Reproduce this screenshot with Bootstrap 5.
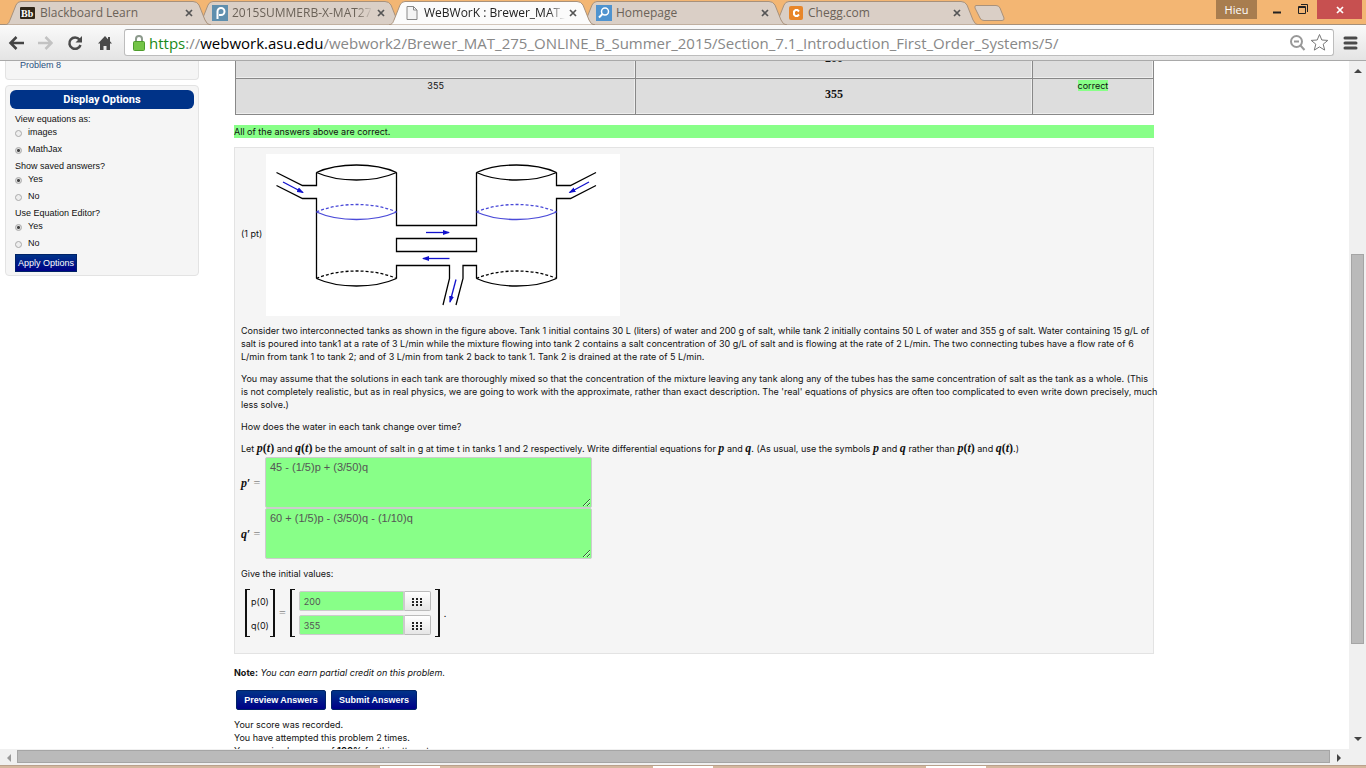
<!DOCTYPE html>
<html lang="en">
<head>
<meta charset="utf-8">
<meta name="viewport" content="width=device-width, initial-scale=1">
<title>WeBWorK : Brewer_MAT_275</title>
<link rel="stylesheet" href="https://cdn.jsdelivr.net/npm/bootstrap@5.3.0/dist/css/bootstrap.min.css">
<style>
body{font:9px/13px Inter,"Liberation Sans",sans-serif;color:#111;background:#fff}
button{font-family:inherit}
/* window frame */
.tabstrip{background:#f3b673;height:25px;border-bottom:1px solid #a68f78;font:12px/16px "Open Sans",sans-serif;padding-left:5px}
.wtab{position:relative;width:206px;height:24px;margin-right:-14px;padding:1px 18px 0 15px;color:#6b6258;gap:4px;isolation:isolate}
.wtab>svg.shape{position:absolute;left:0;top:0;z-index:-1}
.wtab.current{color:#222;height:25px;z-index:9!important}
.wtab .ttl{flex:1;overflow:hidden;white-space:nowrap;color:inherit;text-decoration:none}
.wtab .fade-end{-webkit-mask-image:linear-gradient(90deg,#000 88%,transparent)}
.wtab button,.winbtns button,.toolbar button{border:0;background:none;padding:0;display:flex;align-items:center;justify-content:center;color:#555}
.winbtns .user{width:41px;height:19px;background:#a87d4f;color:#fff;font-size:11px}
.winbtns .shut{width:45px;height:19px;background:#c75050}
.toolbar{height:36px;background:linear-gradient(#fafafa,#e4e4e4);border-bottom:1px solid #a9a9a9}
.navset{width:116px;gap:13px}
.address{height:27px;border:1px solid #bdbdbd;border-top-color:#a3a3a3;border-radius:3px;background:#fff;font:15px/24px "Open Sans",sans-serif;color:#888;white-space:nowrap;overflow:hidden}
/* scroll bars */
.vbar{width:17px;background:#f0f0f0}
.hbar{height:17px;background:#f0f0f0}
.thumb{background:#bababa;border:1px solid #a5a5a5}
.taskline{height:3px;background:#d4b79e;border-top:1px solid #b9a18c}
.taskline i{background:#fff;height:2px;width:60px}
/* course page */
.side{width:200px;padding-left:5px;font:9px/13px "Liberation Sans",sans-serif}
.sidebox{width:194px;border:1px solid #e3e3e3;border-radius:4px;background:#f5f5f5;padding:4px 4px 3px}
.sidebox.first{height:19px;border-top:0;border-radius:0 0 4px 4px;margin-bottom:5px;padding:0 0 0 14px;line-height:8px}
.sidebox.first a{text-decoration:none;color:#2a5080}
.sidebox h2{background:#038;color:#fff;font:bold 11px/19px Roboto,sans-serif;border-radius:6px;text-align:center;margin:0 0 4px}
.sidebox .opts{padding-left:5px}
.sidebox legend{font-size:9px;line-height:13px;margin:0;float:none}
.sidebox label{display:flex;align-items:center;gap:6px;height:12px;margin-bottom:5px}
.sidebox input{appearance:none;width:7px;height:7px;border:1px solid #aaa;border-radius:50%;background:#eee;margin:2px 0 0}
.sidebox input:checked{background:radial-gradient(circle,#444 0 1px,#ddd 2px)}
.bluebtn{background:linear-gradient(#038,#008);color:#fff;border:1px solid #026;border-radius:2px;font:bold 9px/13px "Liberation Sans",sans-serif;padding:0}
.bluebtn.apply{width:62px;height:18px;border-radius:0;font-weight:normal;white-space:nowrap}
.bluebtn.act{height:20px;width:90px}
.bluebtn.act+.act{width:86px}
.actions{padding:3px 2px 0;gap:5px}
.main{margin:0 195px 0 34px;min-width:0}
.answers{margin:-19px 0 10px 1px;width:calc(100% - 1px);background:#ddd;border:1px solid #888;border-collapse:collapse;text-align:center}
.answers td{border:1px solid #888;height:36px;padding:0 2px 1px;vertical-align:top;box-shadow:inset -1px -1px #eee}
.answers td.mth{vertical-align:middle;padding-bottom:5px}
.mth{font-family:"Liberation Serif",serif;font-weight:bold;font-size:12px;line-height:12px}
.okay{background:#8f8}
.problem{background:#f5f5f5;border:1px solid #e3e3e3;margin-top:9px;padding:6px 6px 16px}
.problem p{margin:0 0 9px}
.problem p.statement{white-space:nowrap}
.problem p.lead-in{margin:0;padding-bottom:2px}
.figure-svg{background:#fff}
.eq{width:24px;white-space:nowrap}
.eq span,.eqs{color:#888;font-weight:normal}
textarea.okay{width:327px;height:51px;border:1px solid #ccc;border-radius:2px;color:#555;font:11px/16px "Liberation Sans",sans-serif;padding:1px 4px;resize:both;display:block}
.brk{border:1px solid #111;border-width:1px 2px;width:5px;height:48px}
.brk.l{border-right:0}.brk.r{border-left:0}
.vec{gap:11px;width:20px;text-align:center}
.val input{width:105px;height:20px;border:1px solid #ccc;color:#555;padding:0 4px;background:#8f8;border-radius:2px 0 0 2px}
.val button{width:27px;height:20px;border:1px solid #bbb;border-left-color:#ccc;border-radius:0 2px 2px 0;background:linear-gradient(#fff,#e6e6e6);padding:0;line-height:10px}
</style>
</head>
<body class="vh-100 d-flex flex-column overflow-hidden">
<svg width="0" height="0" class="position-absolute" aria-hidden="true">
  <symbol id="tabshape" viewBox="0 0 206 25"><path d="M0 25C4 24 4 22 5 20L11 5Q12.500 1.500 16 1.500H188Q192 1.500 194 5L200 20Q202 25 206 25Z"/></symbol>
  <symbol id="cross" viewBox="0 0 8 8"><path d="M1 1L7 7M7 1L1 7" stroke="currentColor" stroke-width="1.700"/></symbol>
  <symbol id="keys" viewBox="0 0 10 8"><path d="M0 0h2v2H0zM4 0h2v2H4zM8 0h2v2H8zM0 3h2v2H0zM4 3h2v2H4zM8 3h2v2H8zM0 6h2v2H0zM4 6h2v2H4zM8 6h2v2H8z" fill="#222"/></symbol>
</svg>

<header>
  <div class="tabstrip d-flex">
    <div class="wtab d-flex align-items-center z-3"><svg class="shape" width="206" height="25" fill="#dacfc6" stroke="#a8917b"><use href="#tabshape"/></svg>
      <svg width="16" height="12"><rect width="15" height="12" rx="1" fill="#2f2618"/><text x="1" y="10" font-family="Liberation Serif" font-weight="bold" font-size="10" fill="#fff">Bb</text></svg>
      <a class="ttl" href="#">Blackboard Learn</a><button aria-label="Close tab"><svg width="8" height="8"><use href="#cross"/></svg></button></div>
    <div class="wtab d-flex align-items-center z-2"><svg class="shape" width="206" height="25" fill="#dacfc6" stroke="#a8917b"><use href="#tabshape"/></svg>
      <svg width="16" height="16"><rect width="16" height="16" fill="#5f8fae"/><path d="M5.500 14V6.500a3.500 3.500 0 1 1 3.500 3.500H7" fill="none" stroke="#fff" stroke-width="2"/></svg>
      <a class="ttl fade-end" href="#">2015SUMMERB-X-MAT27</a><button aria-label="Close tab"><svg width="8" height="8"><use href="#cross"/></svg></button></div>
    <div class="wtab current d-flex align-items-center"><svg class="shape" width="206" height="25" fill="#fbfbfb" stroke="#a8917b"><use href="#tabshape"/></svg>
      <svg width="16" height="16"><path d="M3 1.500h6.500L13 5v9.500H3zM9.500 1.500V5H13" fill="#f4f4f4" stroke="#888"/></svg>
      <a class="ttl fade-end" href="#">WeBWorK : Brewer_MAT_2</a><button aria-label="Close tab"><svg width="8" height="8"><use href="#cross"/></svg></button></div>
    <div class="wtab d-flex align-items-center z-2"><svg class="shape" width="206" height="25" fill="#dacfc6" stroke="#a8917b"><use href="#tabshape"/></svg>
      <svg width="16" height="16"><rect width="16" height="16" fill="#4f93cf"/><circle cx="9" cy="6.500" r="3.500" fill="none" stroke="#fff" stroke-width="1.500"/><path d="M6.500 9L3 12.500" stroke="#fff" stroke-width="2"/></svg>
      <a class="ttl" href="#">Homepage</a><button aria-label="Close tab"><svg width="8" height="8"><use href="#cross"/></svg></button></div>
    <div class="wtab d-flex align-items-center z-1"><svg class="shape" width="206" height="25" fill="#dacfc6" stroke="#a8917b"><use href="#tabshape"/></svg>
      <svg width="16" height="16"><rect x="1" y="1" width="14" height="14" rx="2" fill="#e8862a"/><path d="M11 6.500L9.500 5h-2L6 6.500v3L7.500 11h2L11 9.500" fill="none" stroke="#fff" stroke-width="2"/></svg>
      <a class="ttl" href="#">Chegg.com</a><button aria-label="Close tab"><svg width="8" height="8"><use href="#cross"/></svg></button></div>
    <svg class="ms-2" width="34" height="24"><path d="M3 5.500H23Q26 5.500 27 8L31 18Q31.500 20.500 29 20.500H11Q8 20.500 7 18L2 8Q1.500 5.500 3 5.500Z" fill="#dacfc6" stroke="#a8917b"/></svg>
    <div class="winbtns d-flex align-items-start ms-auto me-1">
      <button class="user">Hieu</button>
      <button class="ms-3" aria-label="Minimize"><svg width="9" height="19"><path d="M0 12.500h8" stroke="#222" stroke-width="2"/></svg></button>
      <button class="ms-3 me-2" aria-label="Restore"><svg width="11" height="19"><path d="M.5 6.500h7v7h-7zM.5 7.500h7M3 4.500h6.500V12" fill="none" stroke="#222"/></svg></button>
      <button class="shut text-white" aria-label="Close"><svg width="8" height="8"><use href="#cross"/></svg></button>
    </div>
  </div>
  <div class="toolbar d-flex align-items-center ps-2 pe-2">
    <div class="navset d-flex flex-shrink-0">
      <button aria-label="Back"><svg width="16" height="16" viewBox="0 0 16 16"><path d="M16 8H3M8.500 2L2.500 8l6 6" fill="none" stroke="#444" stroke-width="2.500"/></svg></button>
      <button aria-label="Forward"><svg width="16" height="16" viewBox="0 0 16 16"><path d="M1 8h13M8.500 2l6 6-6 6" fill="none" stroke="#c2c2c2" stroke-width="2.500"/></svg></button>
      <button aria-label="Reload"><svg width="18" height="16" viewBox="0 0 16 16"><path d="M12.500 4.500A5.700 5.700 0 1 0 13.500 10" fill="none" stroke="#4a4a4a" stroke-width="2.500"/><path d="M15 1v6.500H8.500z" fill="#4a4a4a"/></svg></button>
      <button aria-label="Home"><svg width="16" height="16" viewBox="0 0 16 16"><path d="M8 1L1 8.500h2V15h3.500v-4h3v4H13V8.500h2L13 6.300V2h-2v2.200z" fill="#4a4a4a"/></svg></button>
    </div>
    <div class="address flex-fill d-flex align-items-center ps-2 pe-1">
      <svg class="me-1" width="12" height="16"><path d="M3 7V4a3 3 0 0 1 6 0v3" fill="none" stroke="#8c9a8c" stroke-width="2"/><rect x=".5" y="6.500" width="11" height="9" rx="1" fill="#74c447" stroke="#4d9c2c"/></svg>
      <div class="flex-fill" role="textbox" aria-label="Address" contenteditable="true"><span style="color:#1a8a1a">https</span>://<span class="text-black">webwork.asu.edu</span>/webwork2/Brewer_MAT_275_ONLINE_B_Summer_2015/Section_7.1_Introduction_First_Order_Systems/5/</div>
      <svg width="17" height="18"><circle cx="7.500" cy="7.500" r="5.500" fill="none" stroke="#999" stroke-width="2"/><path d="M5 7.500h5M11.500 11.500L15.500 16" stroke="#999" stroke-width="2"/></svg>
      <svg class="ms-1" width="19" height="19" viewBox="0 0 19 19"><path d="M9.500 1.500l2.300 5.500 6 .4-4.600 3.800 1.500 5.900-5.200-3.200-5.200 3.200 1.500-5.900L1.200 7.400l6-.4z" fill="#fff" stroke="#777"/></svg>
    </div>
    <button class="ms-2" aria-label="Menu"><svg width="16" height="14"><path d="M3 2h11M3 7h11M3 12h11" stroke="#4a4a4a" stroke-width="3" stroke-linecap="round"/></svg></button>
  </div>
</header>

<div class="flex-fill d-flex overflow-hidden" style="min-height:0">
  <div class="flex-fill d-flex align-items-start overflow-hidden">
    <aside class="side flex-shrink-0">
      <nav class="sidebox first"><a href="#">Problem 8</a></nav>
      <form class="sidebox">
        <h2>Display Options</h2>
        <div class="opts">
          <fieldset><legend>View equations as:</legend>
            <label><input type="radio" name="eq"> images</label><label><input type="radio" name="eq" checked> MathJax</label></fieldset>
          <fieldset><legend>Show saved answers?</legend>
            <label><input type="radio" name="sv" checked> Yes</label><label><input type="radio" name="sv"> No</label></fieldset>
          <fieldset><legend>Use Equation Editor?</legend>
            <label><input type="radio" name="ed" checked> Yes</label><label><input type="radio" name="ed"> No</label></fieldset>
          <button type="button" class="bluebtn apply">Apply Options</button>
        </div>
      </form>
    </aside>
    <main class="main flex-fill">
      <table class="answers">
        <colgroup><col style="width:43.600%"><col style="width:43.200%"><col style="width:13.200%"></colgroup>
        <tr><td></td><td class="mth">200</td><td></td></tr>
        <tr><td>355</td><td class="mth">355</td><td><span class="okay">correct</span></td></tr>
      </table>
      <div class="okay">All of the answers above are correct.</div>
      <form class="problem">
        <div class="d-flex align-items-center mb-2">
          <span class="text-nowrap pb-1" style="width:25px">(1 pt)</span>
          <svg class="figure-svg" width="354" height="162" viewBox="0 0 354 162" fill="none" stroke="#000" stroke-width="1.300">
            <defs><path id="rim" d="M0 0C22-10 58-10 80 0"/><path id="lip" d="M0 0C22 10 58 10 80 0"/>
            <marker id="tip" viewBox="0 0 7 6" refX="6" refY="3" markerWidth="7" markerHeight="6" markerUnits="userSpaceOnUse" orient="auto"><path d="M0 .5L7 3 0 5.500z" fill="#11c" stroke="none"/></marker></defs>
            <path d="M10.500 18.500L36.500 31.500H50.500V18.500M10.500 31.500L36.500 44.500H50.500V124.500M130.500 18.500V71.500H210.500V18.500M130.500 84.500H210.500V97.500H130.500ZM130.500 124.500V111.500H183.500V124.500L177 151M190 151L197 124.500V111.500H210.500V124.500M290.500 18.500V31.500H304.500L330 18.500M330 31.500L304.500 44.500H290.500V124.500"/>
            <use href="#rim" x="50.500" y="18.500"/><use href="#lip" x="50.500" y="18.500"/><use href="#rim" x="210.500" y="18.500"/><use href="#lip" x="210.500" y="18.500"/>
            <use href="#lip" x="50.500" y="124.500"/><use href="#lip" x="210.500" y="124.500"/>
            <g stroke-dasharray="3 2"><use href="#rim" x="50.500" y="124.500"/><use href="#rim" x="210.500" y="124.500"/></g>
            <g stroke="#4a4ad8"><use href="#lip" x="50.500" y="58"/><use href="#lip" x="210.500" y="58"/><g stroke-dasharray="3 2"><use href="#rim" x="50.500" y="58"/><use href="#rim" x="210.500" y="58"/></g></g>
            <g stroke="#11c"><path marker-end="url(#tip)" d="M17 28L37 38.500"/><path marker-end="url(#tip)" d="M323 28L303.500 38.500"/><path marker-end="url(#tip)" d="M160 78.500H183"/><path marker-end="url(#tip)" d="M183.500 104.500H157"/><path marker-end="url(#tip)" d="M190 125.500L184 148"/></g>
          </svg>
        </div>
        <p class="statement">Consider two interconnected tanks as shown in the figure above. Tank 1 initial contains 30 L (liters) of water and 200 g of salt, while tank 2 initially contains 50 L of water and 355 g of salt. Water containing 15 g/L of<br>salt is poured into tank1 at a rate of 3 L/min while the mixture flowing into tank 2 contains a salt concentration of 30 g/L of salt and is flowing at the rate of 2 L/min. The two connecting tubes have a flow rate of 6<br>L/min from tank 1 to tank 2; and of 3 L/min from tank 2 back to tank 1. Tank 2 is drained at the rate of 5 L/min.</p>
        <p class="statement">You may assume that the solutions in each tank are thoroughly mixed so that the concentration of the mixture leaving any tank along any of the tubes has the same concentration of salt as the tank as a whole. (This<br>is not completely realistic, but as in real physics, we are going to work with the approximate, rather than exact description. The 'real' equations of physics are often too complicated to even write down precisely, much<br>less solve.)</p>
        <p>How does the water in each tank change over time?</p>
        <p class="lead-in">Let <span class="mth"><i>p</i>(<i>t</i>)</span> and <span class="mth"><i>q</i>(<i>t</i>)</span> be the amount of salt in g at time t in tanks 1 and 2 respectively. Write differential equations for <i class="mth">p</i> and <i class="mth">q</i>. (As usual, use the symbols <i class="mth">p</i> and <i class="mth">q</i> rather than <span class="mth"><i>p</i>(<i>t</i>)</span> and <span class="mth"><i>q</i>(<i>t</i>)</span>.)</p>
        <div class="d-flex align-items-center"><label class="eq mth" for="pp"><i>p</i>′ <span>=</span></label><textarea id="pp" class="okay">45 - (1/5)p + (3/50)q</textarea></div>
        <div class="d-flex align-items-center mb-2"><label class="eq mth" for="qp"><i>q</i>′ <span>=</span></label><textarea id="qp" class="okay">60 + (1/5)p - (3/50)q - (1/10)q</textarea></div>
        <p>Give the initial values:</p>
        <div class="d-flex align-items-center ps-1">
          <span class="brk l"></span>
          <div class="vec d-flex flex-column"><label for="p0">p(0)</label><label for="q0">q(0)</label></div>
          <span class="brk r"></span><span class="eqs mth px-1">=</span><span class="brk l me-1"></span>
          <div class="d-flex flex-column gap-1">
            <div class="val d-flex"><input id="p0" type="text" value="200"><button type="button" aria-label="Equation editor"><svg width="10" height="8"><use href="#keys"/></svg></button></div>
            <div class="val d-flex"><input id="q0" type="text" value="355"><button type="button" aria-label="Equation editor"><svg width="10" height="8"><use href="#keys"/></svg></button></div>
          </div>
          <span class="brk r ms-1"></span><span class="ps-1">.</span>
        </div>
      </form>
      <p class="mt-2 pt-1 mb-2"><b>Note:</b> <i>You can earn partial credit on this problem.</i></p>
      <div class="actions d-flex mb-2 mt-2"><button class="bluebtn act" type="button">Preview Answers</button><button class="bluebtn act" type="button">Submit Answers</button></div>
      <p class="text-nowrap">Your score was recorded.<br>You have attempted this problem 2 times.<br>You received a score of <b>100%</b> for this attempt.</p>
    </main>
  </div>
  <div class="vbar d-flex flex-column align-items-center flex-shrink-0 py-2">
    <svg width="8" height="4"><path d="M0 4L4 0l4 4z" fill="#444"/></svg>
    <div style="flex:181"></div><div class="thumb" style="flex:388;width:13px"></div><div style="flex:93"></div>
    <svg width="8" height="4"><path d="M0 0h8L4 4z" fill="#444"/></svg>
  </div>
</div>
<div class="hbar d-flex align-items-center">
  <span class="text-center" style="width:17px"><svg width="4" height="8"><path d="M4 0v8L0 4z" fill="#999"/></svg></span>
  <div class="thumb flex-fill" style="height:13px"></div>
  <span class="text-center" style="width:18px"><svg width="4" height="8"><path d="M0 0v8l4-4z" fill="#444"/></svg></span><span style="width:18px"></span>
</div>
<div class="taskline d-flex justify-content-around"><i class="invisible"></i><i></i><i></i><i></i><i class="invisible"></i></div>
<script src="https://cdn.jsdelivr.net/npm/bootstrap@5.3.0/dist/js/bootstrap.bundle.min.js"></script>
</body>
</html>
